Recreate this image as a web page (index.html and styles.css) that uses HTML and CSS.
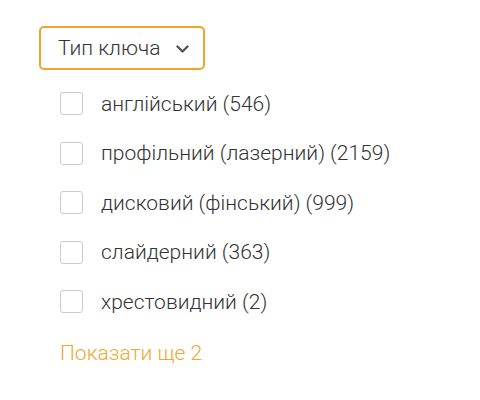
FILE: index.html
```html
<!DOCTYPE html>
<html lang="uk">
<head>
    <meta charset="UTF-8">
    <meta name="viewport" content="width=device-width, initial-scale=1.0">
    <title>Тип ключа</title>
    <link rel="stylesheet" href="styles.css">
</head>
<body>
    <div class="filter">
        <button class="filter-toggle" type="button">
            <span class="filter-title">Тип ключа</span>
            <svg class="chevron" width="13" height="8" viewBox="0 0 13 8">
                <path d="M1.5 1.5 L6.5 6.5 L11.5 1.5" fill="none" stroke="#555" stroke-width="2.4" stroke-linecap="round" stroke-linejoin="round"/>
            </svg>
        </button>

        <ul class="filter-list">
            <li class="filter-item">
                <span class="checkbox"></span>
                <span class="filter-label">англійський (546)</span>
            </li>
            <li class="filter-item">
                <span class="checkbox"></span>
                <span class="filter-label">профільний (лазерний) (2159)</span>
            </li>
            <li class="filter-item">
                <span class="checkbox"></span>
                <span class="filter-label">дисковий (фінський) (999)</span>
            </li>
            <li class="filter-item">
                <span class="checkbox"></span>
                <span class="filter-label">слайдерний (363)</span>
            </li>
            <li class="filter-item">
                <span class="checkbox"></span>
                <span class="filter-label">хрестовидний (2)</span>
            </li>
        </ul>

        <a class="show-more" href="#">Показати ще 2</a>
    </div>
</body>
</html>
```

FILE: styles.css
```css
body {
    margin: 0;
    padding: 26px 0 0 39px;
    font-family: Roboto, 'Noto Sans', sans-serif;
    background: #fff;
    color: #333;
}

.filter-toggle {
    display: flex;
    align-items: center;
    gap: 16px;
    height: 44px;
    width: 166px;
    padding: 0 0 0 17px;
    border: 2px solid #f0a32a;
    border-radius: 5px;
    background: #fff;
    font-family: inherit;
    font-size: 21px;
    font-weight: 300;
    color: #333;
    cursor: pointer;
}

.chevron {
    margin-top: 2px;
}

.filter-list {
    list-style: none;
    margin: 9px 0 0 21px;
    padding: 0;
}

.filter-item {
    display: flex;
    align-items: center;
    height: 49.5px;
}

.checkbox {
    width: 21px;
    height: 21px;
    border: 1px solid #ccc;
    border-radius: 3px;
    margin-right: 18px;
    flex-shrink: 0;
}

.filter-label {
    font-size: 21px;
    font-weight: 300;
    color: #333;
}

.show-more {
    display: inline-block;
    margin: 14px 0 0 21px;
    font-size: 21px;
    font-weight: 300;
    color: #f0a830;
    text-decoration: none;
}
```
